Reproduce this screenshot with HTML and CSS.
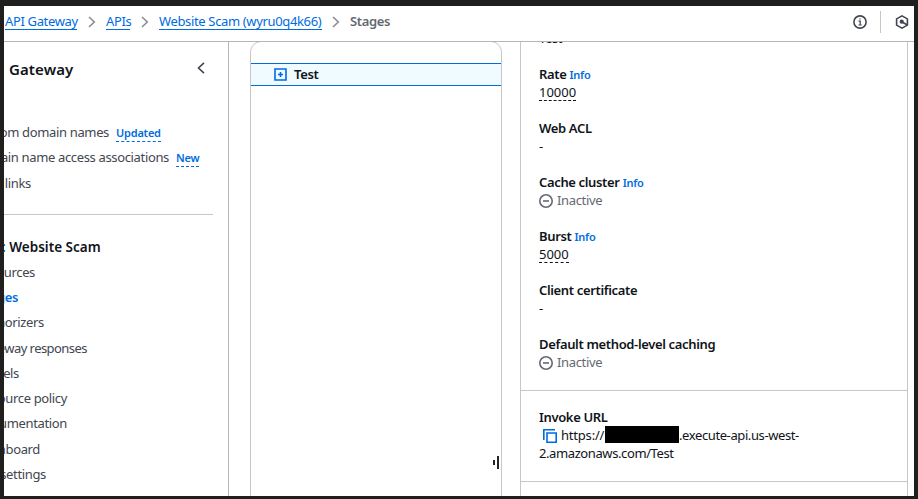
FILE: index.html
```html
<!DOCTYPE html>
<html lang="en">
<head>
<meta charset="utf-8">
<title>API Gateway - Stages</title>
<link rel="stylesheet" href="styles.css">
</head>
<body>
<div class="window">
  <header class="topbar">
    <nav class="crumbs">
      <a class="c1">API Gateway</a>
      <svg class="sep" viewBox="0 0 8 12"><path d="M1 1l5.300 5L1 11"/></svg>
      <a class="c2">APIs</a>
      <svg class="sep" viewBox="0 0 8 12"><path d="M1 1l5.300 5L1 11"/></svg>
      <a class="c3">Website Scam (wyru0q4k66)</a>
      <svg class="sep" viewBox="0 0 8 12"><path d="M1 1l5.300 5L1 11"/></svg>
      <b class="c4">Stages</b>
    </nav>
    <div class="tools">
      <svg class="tool-info" viewBox="0 0 14 14"><circle cx="7" cy="7" r="6.100"/><path d="M5.500 6.200H7.200V10M5.500 10H8.700M6.300 4H7.700"/></svg>
      <span class="divider"></span>
      <svg class="tool-hex" viewBox="0 0 14 14"><path d="M7 .9l5.400 3v6.200L7 13.100l-5.400-3V3.900z"/><circle cx="6.700" cy="6.700" r="1.300" fill="#424650"/><path d="M7 7l5 2.700"/></svg>
    </div>
  </header>
  <div class="columns">
    <aside class="side">
      <div class="side-head"><h2>Gateway</h2>
        <svg class="collapse" viewBox="0 0 8 12"><path d="M7 .8L1.500 6L7 11.200"/></svg></div>
      <ul class="links top">
        <li><span class="w109">om domain names</span><em class="updated">Updated</em></li>
        <li><span class="w169">ain name access associations</span><em class="new">New</em></li>
        <li><span class="w31">links</span></li>
      </ul>
      <hr>
      <h3><i>:</i> Website Scam</h3>
      <ul class="links">
        <li><span class="w35">ources</span></li>
        <li><span class="w18 active">ges</span></li>
        <li><span class="w44">horizers</span></li>
        <li><span class="w87 tight">eway responses</span></li>
        <li><span class="w19">els</span></li>
        <li><span class="w67">ource policy</span></li>
        <li><span class="w67">umentation</span></li>
        <li><span class="w40">hboard</span></li>
        <li><span class="w46">settings</span></li>
      </ul>
    </aside>
    <section class="stages">
      <div class="tree">
        <div class="stage">
          <svg viewBox="0 0 13 13"><path d="M1 1h11v11H1zM6.500 4v5M4 6.500h5"/></svg>
          <b>Test</b>
        </div>
        <div class="resize"><i></i><i></i></div>
      </div>
    </section>
    <main class="details">
      <dl class="fields">
        <div class="first"><dd>Test</dd></div>
        <div><dt>Rate <a>Info</a></dt><dd><span class="dash">10000</span></dd></div>
        <div><dt class="acl">Web ACL</dt><dd>-</dd></div>
        <div><dt class="cluster">Cache cluster <a>Info</a></dt><dd class="off"><svg viewBox="0 0 14 14"><circle cx="7" cy="7" r="6.200"/><path d="M4 7h6"/></svg>Inactive</dd></div>
        <div><dt>Burst <a>Info</a></dt><dd><span class="dash">5000</span></dd></div>
        <div><dt class="cert">Client certificate</dt><dd>-</dd></div>
        <div><dt class="caching">Default method-level caching</dt><dd class="off"><svg viewBox="0 0 14 14"><circle cx="7" cy="7" r="6.200"/><path d="M4 7h6"/></svg>Inactive</dd></div>
      </dl>
      <dl class="invoke">
        <dt>Invoke URL</dt>
        <dd class="url"><svg viewBox="0 0 14 14"><path d="M.8 11V.8H12M4 4h9.200v9.200H4z"/></svg><span class="scheme">https://</span><span class="redacted"></span><span class="host">.execute-api.us-west-</span></dd>
        <dd class="url2">2.amazonaws.com/Test</dd>
      </dl>
    </main>
  </div>
</div>
</body>
</html>
```
FILE: styles.css
```css
* { box-sizing: border-box; }
body {
  margin: 0; width: 918px; height: 499px; overflow: hidden;
  background: #201f1e; padding: 6px 4px 3px;
  font: 13px/18px "Noto Sans", sans-serif; color: #0f141a;
  letter-spacing: -.35px;
}
.window { width: 910px; height: 490px; background: #fff; overflow: hidden; display: flex; flex-direction: column; }
svg { fill: none; stroke: #424650; stroke-width: 1.6; flex: none; display: block; }
h2, h3, ul, dl, dd { margin: 0; padding: 0; }
ul { list-style: none; }
b, dt, h2, h3 { font-weight: 600; }

.topbar { height: 36px; flex: none; border-bottom: 1px solid #b4b4bb; display: flex; justify-content: space-between; }
.crumbs { display: flex; align-items: flex-start; padding: 6px 0 0 1px; white-space: nowrap; }
.crumbs a { color: #006ce0; border-bottom: 1px solid #006ce0; height: 18px; }
.crumbs b { color: #656871; }
.c1 { width: 72px; }
.c2 { width: 24px; }
.c3 { width: 163px; }
.sep { width: 8px; height: 12px; stroke: #8c8c94; margin: 4px 10px 0 11px; }
.c3 + .sep { margin-left: 10px; }
.tools { display: flex; padding-right: 5px; }
.tool-info { width: 14px; height: 14px; margin-top: 9px; }
.tool-info path { stroke-width: 1.2; }
.divider { width: 1px; height: 22px; margin: 5px 14px 0 13px; background: #c6c6cd; }
.tool-hex { width: 14px; height: 14px; margin-top: 9px; }

.columns { display: flex; flex: 1; min-height: 0; }
.side { width: 225px; flex: none; border-right: 1px solid #b4b4bb; overflow: hidden; }
.side-head { display: flex; justify-content: space-between; height: 78px; padding: 17px 23px 0 5px; }
h2 { font-size: 15px; line-height: 20px; letter-spacing: .1px; }
.collapse { width: 8px; height: 12px; margin-top: 3px; }
.links li { display: flex; height: 25.250px; line-height: 25px; color: #424650; white-space: nowrap; }
.links span { display: flex; flex: none; justify-content: flex-end; }
.links .tight { letter-spacing: -.55px; }
.links em { font: 600 11px/16px "Noto Sans", sans-serif; letter-spacing: -.2px; color: #006ce0; height: 17px; margin: 5px 0 0 7px; border-bottom: 1px dashed #006ce0; }
.updated { width: 45px; }
.new { width: 23px; }
.w109 { width: 105px; } .w169 { width: 165px; } .w31 { width: 27px; } .w35 { width: 31px; }
.w18 { width: 14px; } .w44 { width: 40px; } .w87 { width: 83px; } .w19 { width: 15px; }
.w67 { width: 63px; } .w40 { width: 36px; } .w46 { width: 42px; }
.links .active { color: #006ce0; font-weight: 600; }
hr { border: 0; height: 1px; background: #c6c6cd; margin: 18px 15px 0 0; }
h3 { font-size: 13.500px; line-height: 20px; letter-spacing: 0; margin: 22px 0 3px -2px; white-space: nowrap; }
h3 i { font-style: normal; color: #006ce0; }

.stages { flex: none; margin-left: 21px; width: 252px; overflow: hidden; }
.tree { margin-top: -1px; height: 480px; border: 1px solid #c6c6cd; border-radius: 11px 11px 0 0; padding-top: 21px; display: flex; flex-direction: column; }
.stage { height: 23px; background: #f0fbff; border: solid #006ce0; border-width: 1px 0; display: flex; align-items: center; padding-left: 23px; gap: 7px; }
.stage b { margin-top: -2px; }
.stage svg { width: 13px; height: 13px; stroke: #006ce0; }
.resize { display: flex; align-items: center; justify-content: flex-end; gap: 2px; margin: 370px 2px 0 0; height: 13px; }
.resize i { width: 2px; height: 13px; background: #22242a; }
.resize i:first-child { height: 5px; }

.details { width: 388px; flex: none; margin-left: 18px; border: solid #c6c6cd; border-width: 0 1px; overflow: hidden; }
.fields { padding: 5px 18px 0; height: 349px; border-bottom: 1px solid #c6c6cd; }
.fields div { height: 54px; }
.fields .first { height: 36px; margin-top: -18px; }
.fields dt, .fields dd { white-space: nowrap; height: 18px; }
dt a { font-size: 11px; color: #006ce0; letter-spacing: -.25px; }
.dash { display: inline-block; height: 18px; border-bottom: 1px dashed #0f141a; letter-spacing: 0; }
.off { display: flex; align-items: center; gap: 4px; color: #656871; }
.off svg { width: 14px; height: 14px; stroke: #656871; margin-top: 2px; }
.invoke { padding: 17px 18px 0; height: 91px; border-bottom: 1px solid #c6c6cd; white-space: nowrap; }
.url { display: flex; height: 18px; }
.url svg { width: 14px; height: 14px; stroke: #006ce0; margin: 3px 4px 0; }
.scheme { width: 44px; letter-spacing: -.2px; }
.redacted { width: 74px; height: 17px; background: #000; }
.host, .url2 { letter-spacing: -.4px; }
```
